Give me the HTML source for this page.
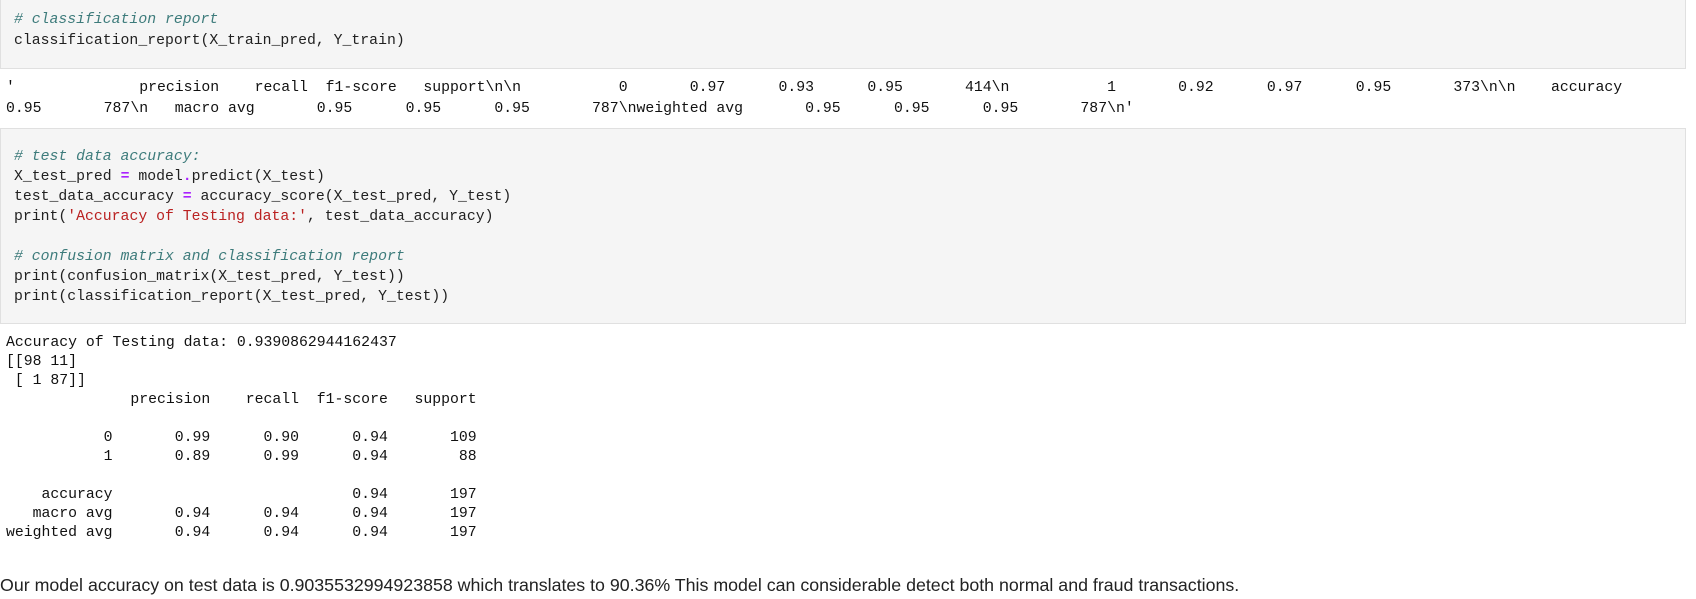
<!DOCTYPE html>
<html><head><meta charset="utf-8"><style>
body{margin:0;background:#fff;width:1696px;height:599px;overflow:hidden;position:relative;font-family:"Liberation Mono",monospace;}
.cell{position:absolute;left:0;width:1686px;background:#f5f5f5;border:1px solid #e0e0e0;box-sizing:border-box;}
pre{margin:0;font-family:"Liberation Mono",monospace;font-size:14.8px;white-space:pre;}
.code{position:absolute;left:14px;line-height:20px;color:#212121;}
.out{position:absolute;left:6px;line-height:19px;color:#111;}
.c{color:#3d7b7b;font-style:italic}
.o{color:#aa22ff;font-weight:bold}
.s{color:#ba2121}
.p{position:absolute;left:0;top:574px;font-family:"Liberation Sans",sans-serif;font-size:17.8px;color:#222;line-height:22px;}
</style></head><body>
<div class="cell" style="top:-1px;height:70px"></div>
<pre class="code" style="top:10px;line-height:21px"><span class="c"># classification report</span>
classification_report(X_train_pred, Y_train)</pre>
<pre class="out" style="top:78px;line-height:20.5px">'              precision    recall  f1-score   support\n\n           0       0.97      0.93      0.95       414\n           1       0.92      0.97      0.95       373\n\n    accuracy
0.95       787\n   macro avg       0.95      0.95      0.95       787\nweighted avg       0.95      0.95      0.95       787\n'</pre>
<div class="cell" style="top:128px;height:196px"></div>
<pre class="code" style="top:147px"><span class="c"># test data accuracy:</span>
X_test_pred <span class="o">=</span> model<span class="o">.</span>predict(X_test)
test_data_accuracy <span class="o">=</span> accuracy_score(X_test_pred, Y_test)
print(<span class="s">'Accuracy of Testing data:'</span>, test_data_accuracy)

<span class="c"># confusion matrix and classification report</span>
print(confusion_matrix(X_test_pred, Y_test))
print(classification_report(X_test_pred, Y_test))</pre>
<pre class="out" style="top:334px">Accuracy of Testing data: 0.9390862944162437
[[98 11]
 [ 1 87]]
              precision    recall  f1-score   support

           0       0.99      0.90      0.94       109
           1       0.89      0.99      0.94        88

    accuracy                           0.94       197
   macro avg       0.94      0.94      0.94       197
weighted avg       0.94      0.94      0.94       197</pre>
<div class="p">Our model accuracy on test data is 0.9035532994923858 which translates to 90.36% This model can considerable detect both normal and fraud transactions.</div>
</body></html>
